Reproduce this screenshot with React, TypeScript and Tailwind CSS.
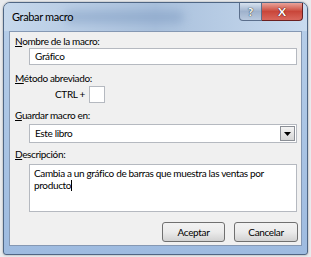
import React from "react";

const font = { fontFamily: 'Lato, "Liberation Sans", Arial, sans-serif' };

function Label({ first, rest }: { first: string; rest: string }) {
  return (
    <div className="text-[10px] leading-[12px] tracking-[-0.35px] text-black">
      <span className="underline underline-offset-1">{first}</span>
      {rest}
    </div>
  );
}

const txt = "text-[10px] tracking-[-0.35px] text-black";

export default function App() {
  return (
    <div className="w-[311px] h-[257px] bg-[#e9ebee] relative overflow-hidden" style={font}>
      <div className="absolute left-[3px] top-[2px] w-[305px] h-[253px] rounded-t-[7px] rounded-b-[3px] border border-[#4f6684] bg-gradient-to-b from-[#b8cfe9] to-[#9ebbe0] flex flex-col shadow-[0_0_2px_rgba(0,0,0,0.4)]">
        {/* title bar */}
        <div className="relative h-[28px] flex items-start rounded-t-[6px] bg-gradient-to-r from-[#c6d8ec] via-[#a9c0dc] to-[#c9dbef]">
          <div className="absolute left-[60px] top-[8px] w-[120px] h-[12px] rounded-full bg-[#6f8eb8] opacity-40 blur-[5px]" />
          <span className="relative ml-[8px] mt-[7px] text-[11px] leading-[14px] tracking-[-0.35px] text-black">Grabar macro</span>
          <div className="ml-auto mr-[4px] flex">
            <div className="w-[23px] h-[18px] rounded-bl-[4px] border border-[#5b6f8c] border-t-0 bg-gradient-to-b from-[#d7e2ef] via-[#9fb2cc] to-[#b9c9de] flex items-center justify-center">
              <span className="text-[12px] font-bold text-white leading-none" style={{ textShadow: "0 0 1px #233, 0 0 1px #233" }}>?</span>
            </div>
            <div className="w-[41px] h-[18px] rounded-br-[4px] border border-[#6a2020] border-t-0 border-l-0 bg-gradient-to-b from-[#e8a39a] via-[#c9463a] to-[#d9675c] flex items-center justify-center">
              <span className="text-[12px] font-bold text-white leading-none" style={{ textShadow: "0 0 1px #400, 0 0 1px #400" }}>X</span>
            </div>
          </div>
        </div>
        {/* content */}
        <div className="mx-[5px] w-[293px] h-[215px] bg-[#f0f0f0] border border-[#8598b3] flex flex-col pl-[5px] pt-[3px]">
          <Label first="N" rest="ombre de la macro:" />
          <div className={`ml-[14px] mt-[1px] w-[268px] h-[17px] bg-white border border-[#b5b9c0] flex items-center pl-[5px] ${txt}`}>
            Gráfico
          </div>
          <div className="mt-[7px]">
            <Label first="M" rest="étodo abreviado:" />
          </div>
          <div className="mt-[2px] ml-[40px] flex items-center gap-[4px]">
            <span className={txt}>CTRL +</span>
            <div className="w-[16px] h-[17px] bg-white border border-[#b5b9c0]" />
          </div>
          <div className="mt-[6px]">
            <Label first="G" rest="uardar macro en:" />
          </div>
          <div className={`ml-[14px] mt-[3px] w-[268px] h-[19px] bg-white border border-[#b5b9c0] flex items-center pl-[5px] ${txt}`}>
            <span className="flex-1">Este libro</span>
            <div className="w-[15px] h-[15px] mr-[1px] border border-[#8b8f96] bg-gradient-to-b from-[#f4f4f4] to-[#d6d6d6] flex items-center justify-center">
              <svg width="7" height="4" viewBox="0 0 7 4"><path d="M0 0h7L3.5 4z" fill="#000" /></svg>
            </div>
          </div>
          <div className="mt-[5px]">
            <Label first="D" rest="escripción:" />
          </div>
          <div className={`ml-[14px] mt-[4px] w-[268px] h-[48px] bg-white border border-[#b5b9c0] pl-[4px] pt-[2px] leading-[12px] whitespace-nowrap ${txt}`}>
            Cambia a un gráfico de barras que muestra las ventas por
            <br />
            producto<span className="inline-block w-[1px] h-[11px] bg-black align-[-2px]" />
          </div>
          <div className="mt-[10px] ml-[147px] flex gap-[9px]">
            <div className={`w-[63px] h-[20px] rounded-[3px] border border-[#707070] bg-gradient-to-b from-[#f2f2f2] via-[#ebebeb] to-[#d2d2d2] flex items-center justify-center ${txt}`}>
              Aceptar
            </div>
            <div className={`w-[64px] h-[20px] rounded-[3px] border border-[#707070] bg-gradient-to-b from-[#f2f2f2] via-[#ebebeb] to-[#d2d2d2] flex items-center justify-center ${txt}`}>
              Cancelar
            </div>
          </div>
        </div>
      </div>
    </div>
  );
}
